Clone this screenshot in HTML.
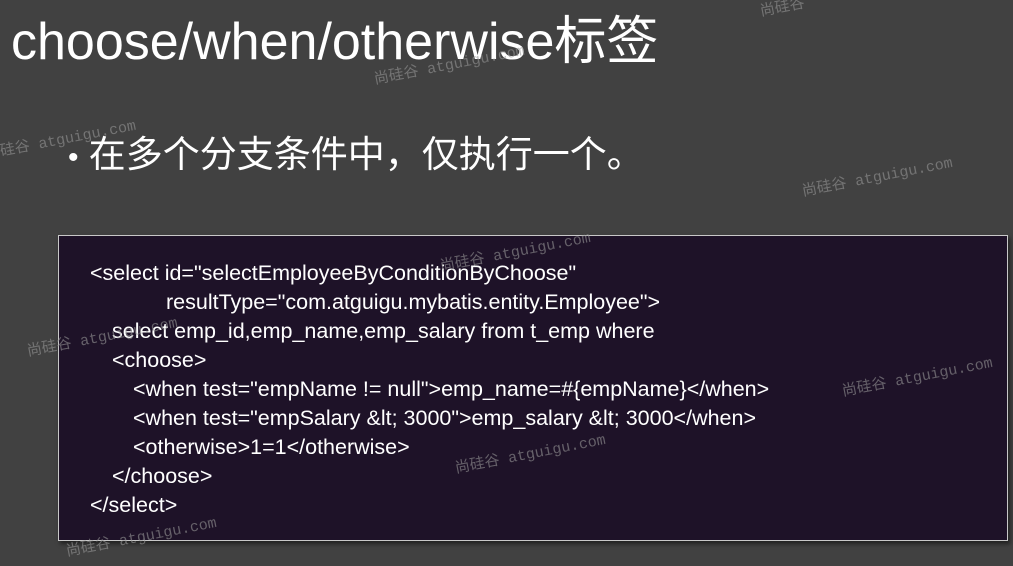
<!DOCTYPE html>
<html><head><meta charset="utf-8"><style>
body{margin:0;width:1013px;height:566px;background:#414141;overflow:hidden;position:relative;font-family:"Liberation Sans","Noto Sans CJK SC",sans-serif;color:#fff}
.t{position:absolute;white-space:nowrap}
.box{position:absolute;left:58px;top:235px;width:948px;height:304px;background:#1e1228;border:1px solid #c8c8c8;box-shadow:2px 3px 4px rgba(0,0,0,.5)}
.c{position:absolute;white-space:nowrap;font-size:21.5px;line-height:29px}
.w{position:absolute;white-space:nowrap;color:rgba(150,150,150,.6);font-family:"Liberation Mono","Noto Sans CJK SC",monospace;font-size:15px;transform:rotate(-11deg);transform-origin:left center}
</style></head><body>
<div class="t" style="left:11px;top:11px;font-size:52px;line-height:62px">choose/when/otherwise标签</div>
<div class="t" style="left:68px;top:131px;font-size:37px;line-height:48px"><span style="font-size:30px">•</span> 在多个分支条件中，仅执行一个。</div>
<div class="box"></div>
<div class="c" style="left:90px;top:259px">&lt;select id="selectEmployeeByConditionByChoose"</div>
<div class="c" style="left:166px;top:288px">resultType="com.atguigu.mybatis.entity.Employee"&gt;</div>
<div class="c" style="left:112px;top:317px">select emp_id,emp_name,emp_salary from t_emp where</div>
<div class="c" style="left:112px;top:346px">&lt;choose&gt;</div>
<div class="c" style="left:133px;top:375px">&lt;when test="empName != null"&gt;emp_name=#{empName}&lt;/when&gt;</div>
<div class="c" style="left:133px;top:404px">&lt;when test="empSalary &amp;lt; 3000"&gt;emp_salary &amp;lt; 3000&lt;/when&gt;</div>
<div class="c" style="left:133px;top:433px">&lt;otherwise&gt;1=1&lt;/otherwise&gt;</div>
<div class="c" style="left:112px;top:462px">&lt;/choose&gt;</div>
<div class="c" style="left:90px;top:491px">&lt;/select&gt;</div>
<div class="w" style="left:374px;top:68px">尚硅谷 atguigu.com</div>
<div class="w" style="left:0px;top:140px">硅谷 atguigu.com</div>
<div class="w" style="left:802px;top:180px">尚硅谷 atguigu.com</div>
<div class="w" style="left:440px;top:255px">尚硅谷 atguigu.com</div>
<div class="w" style="left:27px;top:340px">尚硅谷 atguigu.com</div>
<div class="w" style="left:842px;top:380px">尚硅谷 atguigu.com</div>
<div class="w" style="left:455px;top:457px">尚硅谷 atguigu.com</div>
<div class="w" style="left:66px;top:540px">尚硅谷 atguigu.com</div>
<div class="w" style="left:760px;top:0px">尚硅谷</div>
</body></html>
